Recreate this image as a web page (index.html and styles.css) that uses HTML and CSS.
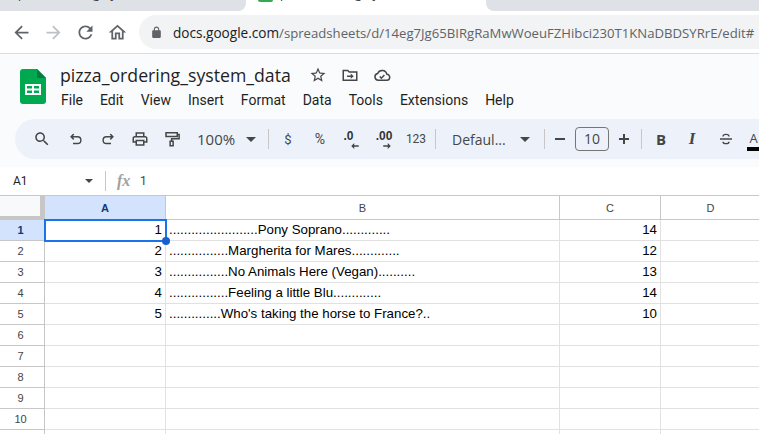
FILE: index.html
```html
<!DOCTYPE html>
<html lang="en">
<head>
<meta charset="utf-8">
<title>pizza_ordering_system_data</title>
<link rel="stylesheet" href="styles.css">
</head>
<body>
<div class="tabs">
  <div class="tab tab-left"><span class="tab-text">pizza_ordering_system_data</span></div>
  <div class="tab tab-active"><i class="favicon"></i><span class="tab-text">pizza_ordering_system_data</span></div>
  <div class="tab tab-right"></div>
</div>
<div class="browserbar">
  <div class="navs">
    <svg class="nav" viewBox="0 0 24 24"><path fill="#5f6368" d="M20 11H7.830l5.590-5.590L12 4l-8 8 8 8 1.410-1.410L7.830 13H20v-2z"/></svg>
    <svg class="nav" viewBox="0 0 24 24"><path fill="#bdc1c6" d="M4 11h12.170l-5.590-5.590L12 4l8 8-8 8-1.410-1.410L16.170 13H4v-2z"/></svg>
    <svg class="nav" viewBox="0 0 24 24"><path fill="#5f6368" d="M17.650 6.350C16.200 4.900 14.210 4 12 4c-4.420 0-7.990 3.580-7.990 8s3.570 8 7.990 8c3.730 0 6.840-2.550 7.730-6h-2.080c-.82 2.330-3.040 4-5.650 4-3.310 0-6-2.690-6-6s2.690-6 6-6c1.660 0 3.140.69 4.220 1.780L13 11h7V4l-2.350 2.350z"/></svg>
    <svg class="nav" viewBox="0 0 24 24"><path fill="#5f6368" d="M12 5.690l5 4.500V18h-2v-6H9v6H7v-7.810l5-4.500M12 3L2 12h3v8h6v-6h2v6h6v-8h3L12 3z"/></svg>
  </div>
  <div class="omnibox">
    <svg class="lock" viewBox="0 0 24 24"><path fill="#5f6368" d="M18 8h-1V6c0-2.760-2.240-5-5-5S7 3.240 7 6v2H6c-1.100 0-2 .9-2 2v10c0 1.100.9 2 2 2h12c1.100 0 2-.9 2-2V10c0-1.100-.9-2-2-2zM9 6c0-1.660 1.340-3 3-3s3 1.340 3 3v2H9V6z"/></svg>
    <span class="url"><b class="host">docs.google.com</b>/spreadsheets/d/14eg7Jg65BIRgRaMwWoeuFZHibci230T1KNaDBDSYRrE/edit#</span>
  </div>
</div>
<header class="appbar">
  <div class="titlerow">
    <svg class="logo" viewBox="0 0 26 35">
      <path fill="#00a94f" d="M3 0h14l9 9v23a3 3 0 0 1-3 3H3a3 3 0 0 1-3-3V3a3 3 0 0 1 3-3z"/>
      <path fill="#0a7a3e" d="M17 0l9 9h-9z"/>
      <path fill="#fff" d="M5 15h16v11H5zm2 2v2.500h5V17zm7 0v2.500h5V17zM7 21.500V24h5v-2.500zm7 0V24h5v-2.500z"/>
    </svg>
    <div class="titlecol">
      <div class="titleline">
        <span class="doctitle">pizza_ordering_system_data</span>
        <svg class="ti" viewBox="0 0 24 24"><path fill="#444746" d="M22 9.240l-7.190-.62L12 2 9.190 8.630 2 9.240l5.460 4.730L5.820 21 12 17.270 18.180 21l-1.630-7.030L22 9.240zM12 15.400l-3.760 2.270 1-4.280-3.320-2.880 4.380-.38L12 6.100l1.710 4.040 4.380.38-3.320 2.880 1 4.280L12 15.400z"/></svg>
        <svg class="ti" viewBox="0 0 24 24"><path fill="none" stroke="#444746" stroke-width="2" d="M3 6h6l2 2h10v11H3z"/><path fill="#444746" d="M8 12.500h5V10l4 3.500-4 3.500v-2.500H8z"/></svg>
        <svg class="ti" viewBox="0 0 24 24"><path fill="none" stroke="#444746" stroke-width="2" d="M7 19a4.500 4.500 0 0 1-.8-8.900A6.500 6.500 0 0 1 18.500 11a4 4 0 0 1-.5 8z"/><path fill="none" stroke="#444746" stroke-width="2" d="M9 14l2.200 2.200 4-4.200"/></svg>
      </div>
      <nav class="menu">
        <span>File</span><span>Edit</span><span>View</span><span>Insert</span><span>Format</span><span>Data</span><span>Tools</span><span>Extensions</span><span>Help</span>
      </nav>
    </div>
  </div>
  <div class="toolbar">
    <span class="tb tb-search"><svg class="ic" viewBox="0 0 24 24"><path fill="#444746" d="M15.500 14h-.79l-.28-.27C15.410 12.590 16 11.110 16 9.500 16 5.910 13.090 3 9.500 3S3 5.910 3 9.500 5.910 16 9.500 16c1.610 0 3.090-.59 4.230-1.570l.27.28v.79l5 4.990L20.490 19l-4.990-5zm-6 0C7.010 14 5 11.990 5 9.500S7.010 5 9.500 5 14 7.010 14 9.500 11.990 14 9.500 14z"/></svg></span>
    <span class="tb"><svg class="ic" viewBox="0 0 24 24"><path fill="none" stroke="#444746" stroke-width="1.900" d="M9 5.500L5.500 9 9 12.500M5.500 9h8.500a4.500 4.500 0 0 1 0 9H8"/></svg></span>
    <span class="tb"><svg class="ic" viewBox="0 0 24 24"><path fill="none" stroke="#444746" stroke-width="1.900" d="M15 5.500L18.500 9 15 12.500M18.500 9H10a4.500 4.500 0 0 0 0 9h6"/></svg></span>
    <span class="tb"><svg class="ic" viewBox="0 0 24 24"><path fill="#444746" d="M19 8h-1V3H6v5H5c-1.660 0-3 1.340-3 3v6h4v4h12v-4h4v-6c0-1.660-1.340-3-3-3zM8 5h8v3H8V5zm8 12v2H8v-4h8v2zm2-2v-2H6v2H4v-4c0-.55.45-1 1-1h14c.55 0 1 .45 1 1v4h-2z"/></svg></span>
    <span class="tb"><svg class="ic" viewBox="0 0 24 24"><path fill="none" stroke="#444746" stroke-width="2" d="M4 3.500h15v5H4zM19 6h2.500v5.500H11.500V15M9.500 15h4v6h-4z"/></svg></span>
    <span class="zoomval">100%</span><i class="caret caret-zoom"></i>
    <i class="sep sep-a"></i>
    <span class="tb sym">$</span>
    <span class="tb pct">%</span>
    <span class="tb dec"><span class="dectext dectext-one">.0</span><svg class="decarrow" viewBox="0 0 10 8"><path fill="#444746" d="M4 0v3h6v2H4v3L0 4z"/></svg></span>
    <span class="tb dec"><span class="dectext">.00</span><svg class="decarrow" viewBox="0 0 10 8"><path fill="#444746" d="M6 0v3H0v2h6v3l4-4z"/></svg></span>
    <span class="tb num">123</span>
    <i class="sep sep-b"></i>
    <span class="fontname">Defaul...</span><i class="caret caret-font"></i>
    <i class="sep sep-c"></i>
    <span class="tb opsign"><i class="minus"></i></span>
    <span class="sizebox">10</span>
    <span class="tb opsign"><i class="plus"></i></span>
    <i class="sep sep-d"></i>
    <span class="tb fmt bold">B</span>
    <span class="tb fmt ital">I</span>
    <span class="tb"><svg class="ic" viewBox="0 0 24 24"><path fill="none" stroke="#444746" stroke-width="1.800" d="M4 12h16M8 8.500C8 5 16 5 16 8.500M8 15.500C8 19 16 19 16 15.500"/></svg></span>
    <span class="colorA">A</span>
  </div>
</header>
<div class="formula">
  <span class="cellname">A1</span><i class="caret caret-name"></i>
  <i class="sep sep-f"></i>
  <span class="fx">fx</span>
  <span class="fval">1</span>
</div>
<main class="sheet">
  <div class="corner"></div><div class="ch ch-on">A</div><div class="ch">B</div><div class="ch">C</div><div class="ch">D</div>

  <div class="rh rh-on">1</div><div class="c num-c first">1</div><div class="c">........................Pony Soprano.............</div><div class="c num-c">14</div><div class="c"></div>
  <div class="rh">2</div><div class="c num-c">2</div><div class="c">................Margherita for Mares.............</div><div class="c num-c">12</div><div class="c"></div>
  <div class="rh">3</div><div class="c num-c">3</div><div class="c">................No Animals Here (Vegan)..........</div><div class="c num-c">13</div><div class="c"></div>
  <div class="rh">4</div><div class="c num-c">4</div><div class="c">................Feeling a little Blu.............</div><div class="c num-c">14</div><div class="c"></div>
  <div class="rh">5</div><div class="c num-c">5</div><div class="c">..............Who's taking the horse to France?..</div><div class="c num-c">10</div><div class="c"></div>
  <div class="rh">6</div><div class="c"></div><div class="c"></div><div class="c"></div><div class="c"></div>
  <div class="rh">7</div><div class="c"></div><div class="c"></div><div class="c"></div><div class="c"></div>
  <div class="rh">8</div><div class="c"></div><div class="c"></div><div class="c"></div><div class="c"></div>
  <div class="rh">9</div><div class="c"></div><div class="c"></div><div class="c"></div><div class="c"></div>
  <div class="rh">10</div><div class="c"></div><div class="c"></div><div class="c"></div><div class="c"></div>
  <div class="rh"></div><div class="c"></div><div class="c"></div><div class="c"></div><div class="c"></div>
</main>
</body>
</html>
```
FILE: styles.css
```css
* { box-sizing: border-box; }
html, body { margin: 0; padding: 0; height: 100%; overflow: hidden; background: #fff; }
body { width: 759px; height: 434px; font-family: "Liberation Sans", Arial, sans-serif; color: #000; }
i { display: block; }

.tabs { display: flex; height: 11px; background: #dee1e6; overflow: hidden; }
.tab { height: 11px; overflow: hidden; position: relative; }
.tab-left { width: 246px; background: #dee1e6; border-bottom-right-radius: 8px; box-shadow: 8px 0 0 #fff; z-index: 1; }
.tab-active { width: 240px; background: #fff; display: flex; align-items: flex-start; gap: 7px; padding-left: 12px; }
.tab-right { flex: 1; background: #dee1e6; border-bottom-left-radius: 8px; box-shadow: -8px 0 0 #fff; }
.tab-text { display: block; font: 12px "Open Sans", sans-serif; color: #333; margin-top: -15px; white-space: nowrap; }
.tab-left .tab-text { margin-left: 18px; }
.favicon { width: 15px; height: 2px; background: #34a853; border-radius: 0 0 2px 2px; }

.browserbar { height: 43px; display: flex; align-items: center; background: #fff; border-bottom: 1px solid #dadce0; }
.navs { display: flex; width: 139px; padding-left: 10.500px; gap: 11px; }
.nav { width: 21px; height: 21px; }
.omnibox { flex: 1; height: 34px; background: #f1f3f4; border-radius: 17px 0 0 17px; display: flex; align-items: center; padding-left: 11px; overflow: hidden; }
.lock { width: 13px; height: 13px; flex: none; }
.url { margin-left: 10px; font: 13.150px "Open Sans", sans-serif; color: #5f6368; white-space: nowrap; }
.host { font-weight: 400; font-size: 13.600px; color: #202124; }

.appbar { height: 113px; background: #f9fbfd; padding-top: 15px; }
.titlerow { display: flex; padding-left: 20px; height: 50px; }
.logo { width: 26px; height: 35px; flex: none; }
.titlecol { margin-left: 14px; margin-top: -5px; }
.titleline { display: flex; align-items: center; height: 22px; }
.doctitle { font: 17.700px/22px "Open Sans", sans-serif; color: #1f1f1f; width: 249px; white-space: nowrap; }
.ti { width: 18px; height: 18px; margin-right: 14px; flex: none; }
.menu { display: flex; gap: 17px; margin-top: 4px; padding-left: 1px; font: 14px/20px "Roboto", sans-serif; color: #1f1f1f; }

.toolbar { margin: 0 0 0 15px; height: 40px; background: #edf2fa; border-radius: 20px 0 0 20px; display: flex; align-items: center; padding-left: 11px; overflow: hidden; }
.tb { width: 32px; height: 28px; flex: none; display: flex; align-items: center; justify-content: center; color: #444746; position: relative; }
.tb-search { margin-right: 2px; }
.ic { width: 18px; height: 18px; }
.sym { font: 13px "Roboto", sans-serif; }
.pct { font: 14px "Roboto", sans-serif; }
.num { font: 12px "Roboto", sans-serif; }
.dec { font: bold 12px "Liberation Sans", sans-serif; }
.dectext { margin-top: -6px; color: #333; }
.dectext-one { margin-right: 7px; }
.decarrow { width: 8px; height: 6px; position: absolute; left: 15px; top: 18px; }
.zoomval { width: 36px; margin-left: 9px; font: 15px "Open Sans", sans-serif; color: #444746; flex: none; white-space: nowrap; }
.caret { width: 0; height: 0; border-left: 5px solid transparent; border-right: 5px solid transparent; border-top: 5px solid #444746; flex: none; }
.caret-zoom { margin-left: 13px; }
.sep { width: 1px; height: 20px; background: #c7c7c7; flex: none; }
.sep-a { margin: 0 3px 0 12px; }
.sep-b { margin: 0 0 0 3px; }
.fontname { width: 56px; margin-left: 16px; font: 14px "Open Sans", sans-serif; color: #444746; flex: none; }
.caret-font { margin-left: 12px; }
.sep-c { margin-left: 14px; margin-right: -1px; }
.opsign { width: 32px; }
.minus { width: 10px; height: 2px; background: #444746; }
.plus { width: 10px; height: 10px; background: linear-gradient(#444746, #444746) center/10px 2px no-repeat, linear-gradient(#444746, #444746) center/2px 10px no-repeat; }
.sizebox { width: 34px; height: 24px; border: 1px solid #747775; border-radius: 4px; margin: 0 -1px; font: 14px/22px "Open Sans", sans-serif; text-align: center; color: #444746; flex: none; }
.sep-d { margin-left: 1px; }
.fmt { font: 15px "Open Sans", sans-serif; }
.bold { font-weight: 700; margin-left: 3px; }
.ital { font: italic 700 17px "Liberation Serif", serif; margin-left: -1px; margin-right: 2px; }
.colorA { width: 13px; margin-left: 5px; height: 20px; flex: none; font: 13px/14px "Open Sans", sans-serif; color: #444746; border-bottom: 4px solid #000; text-align: center; margin-top: 4px; }

.formula { height: 29px; display: flex; align-items: center; background: #fff; font: 12px "Roboto", sans-serif; border-bottom: 1px solid #c7c7c7; }
.cellname { width: 71px; margin-left: 13px; color: #1f1f1f; flex: none; }
.caret-name { border-left-width: 4px; border-right-width: 4px; border-top-width: 4px; margin-left: 1px; }
.sep-f { margin-left: 12px; }
.fx { margin-left: 11px; width: 23px; font: italic 700 16px "Liberation Serif", serif; color: #a0a0a0; flex: none; }
.fval { color: #444; }

.sheet { display: grid; grid-template-columns: 45px 121px 394px 101px 100px; grid-template-rows: 24px; grid-auto-rows: 21px; position: relative; background: #fff; }
.corner { background: #f8f9fa; border-right: 5px solid #c7c7c7; border-bottom: 4px solid #c7c7c7; }
.ch { border-right: 1px solid #c7c7c7; border-bottom: 1px solid #c7c7c7; display: flex; align-items: center; justify-content: center; font: 11px "Liberation Sans", sans-serif; color: #444; background: #fff; }
.ch-on { background: #d3e3fd; color: #0b3a78; font-weight: 700; }
.rh { border-right: 1px solid #c7c7c7; border-bottom: 1px solid #c7c7c7; display: flex; align-items: center; justify-content: center; font: 11px "Liberation Sans", sans-serif; color: #444; padding-right: 3px; background: #fff; }
.rh-on { background: #d3e3fd; color: #0b3a78; font-weight: 700; }
.c { border-right: 1px solid #e1e1e1; border-bottom: 1px solid #e1e1e1; font: 13.300px/20px "Liberation Sans", sans-serif; padding: 0 3px; white-space: nowrap; color: #000; }
.num-c { text-align: right; }
.first { position: relative; outline: 2px solid #1a73e8; outline-offset: -1px; z-index: 1; }
.first::after { content: ""; position: absolute; right: -5px; bottom: -5px; width: 8px; height: 8px; border-radius: 50%; background: #1a5fd0; }
```
